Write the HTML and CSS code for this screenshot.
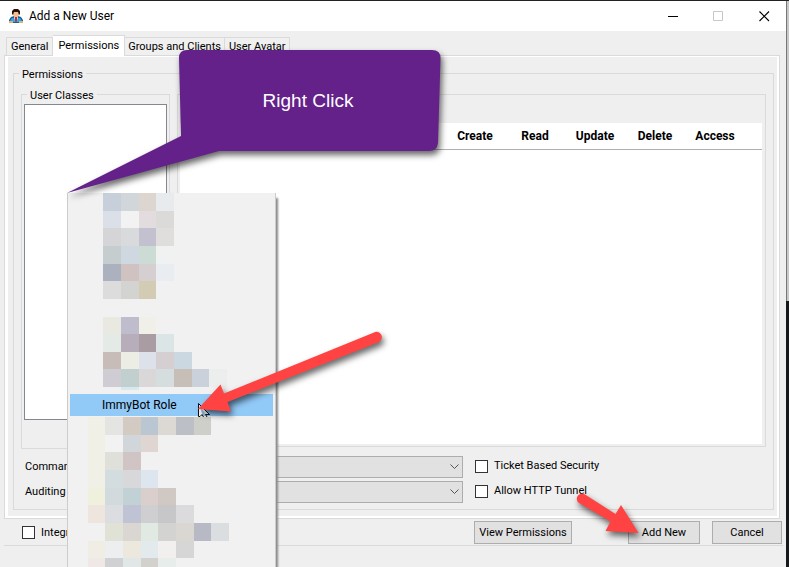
FILE: index.html
```html
<!DOCTYPE html>
<html lang="en">
<head>
<meta charset="utf-8">
<title>Add a New User</title>
<link rel="stylesheet" href="styles.css">
</head>
<body>
<main class="window">
  <header class="titlebar">
    <svg class="app-icon" width="14" height="15" viewBox="0 0 14 15" aria-hidden="true">
      <path d="M0 14v-3l2-3 3-1h4l3 1 2 3v3z" fill="#17609c"/>
      <path d="M1 12l2-3h2l2 4 2-4h2l2 3v1H1z" fill="#2fa5e4"/>
      <path d="M4 3h6v3L8 9H6L4 6z" fill="#f5c08c"/>
      <path d="M3 5V2l2-2h4l2 2v3l-1 1-1-3H5L4 6z" fill="#2a1110"/>
      <path d="M5 8l2 1 2-1-1 4H6z" fill="#fff"/>
      <path d="M6 8h2v4l-1 1-1-1z" fill="#d02a2a"/>
      <path d="M0 12h4v2H0zM10 12h4v2h-4z" fill="#e0b06c"/>
    </svg>
    <h1>Add a New User</h1>
    <div class="caption">
      <button type="button" aria-label="Minimize"><svg width="11" height="11" viewBox="0 0 11 11"><path d="M1 5.500h10" stroke="#000"/></svg></button>
      <button type="button" aria-label="Maximize" disabled><svg width="11" height="11" viewBox="0 0 11 11"><path d="M.5.500h9v9h-9z" fill="none" stroke="#c8c8c8"/></svg></button>
      <button type="button" aria-label="Close"><svg width="11" height="11" viewBox="0 0 11 11"><path d="M.5.500l9.500 9.500M10 .5l-9.500 9.500" stroke="#000" stroke-width="1.100"/></svg></button>
    </div>
  </header>

  <nav class="tabs" role="tablist">
    <button type="button" role="tab">General</button>
    <button type="button" role="tab" class="active" aria-selected="true">Permissions</button>
    <button type="button" role="tab">Groups and Clients</button>
    <button type="button" role="tab">User Avatar</button>
  </nav>

  <section class="panel">
    <div class="group outer">
      <h2>Permissions</h2>
      <div class="columns">
        <div class="group classes">
          <h2>User Classes</h2>
          <div class="listbox" role="listbox" aria-label="User Classes" tabindex="0"></div>
        </div>
        <div class="group rights">
          <div class="sheet">
            <table>
              <thead><tr><th class="name"></th><th>Create</th><th>Read</th><th>Update</th><th>Delete</th><th>Access</th><th class="rest"></th></tr></thead>
            </table>
          </div>
        </div>
      </div>
      <div class="options">
        <label for="command">Command</label>
        <span class="combo"><select id="command"><option></option></select><svg width="9" height="6" viewBox="0 0 9 6"><path d="M.5.500l4 4 4-4" fill="none" stroke="#555"/></svg></span>
        <label class="check"><input type="checkbox">Ticket Based Security</label>
        <label for="auditing">Auditing</label>
        <span class="combo"><select id="auditing"><option></option></select><svg width="9" height="6" viewBox="0 0 9 6"><path d="M.5.500l4 4 4-4" fill="none" stroke="#555"/></svg></span>
        <label class="check"><input type="checkbox">Allow HTTP Tunnel</label>
      </div>
    </div>
  </section>

  <footer class="actions">
    <label class="check"><input type="checkbox">Integration</label>
    <button type="button" class="view">View Permissions</button>
    <button type="button" class="add">Add New</button>
    <button type="button" class="cancel">Cancel</button>
  </footer>
</main>

<div class="menu" role="menu">
  <svg class="mosaic" width="209" height="374" viewBox="67 193 209 374" shape-rendering="crispEdges" aria-hidden="true">
    <g id="upper">
      <path fill="#c7d0da" d="M103 193h18v18h-18z"/><path fill="#d0d6da" d="M121 193h18v18h-18z"/><path fill="#ddd5cf" d="M139 193h17v18h-17z"/><path fill="#e7ebee" d="M156 193h18v18h-18z"/>
      <path fill="#dadfe8" d="M103 211h18v17h-18z"/><path fill="#f2f2f2" d="M121 211h18v17h-18z"/><path fill="#e3dcdf" d="M139 211h17v17h-17z"/><path fill="#dbdad9" d="M156 211h18v17h-18z"/>
      <path fill="#d5d5d8" d="M103 228h18v18h-18z"/><path fill="#d9dadb" d="M121 228h18v18h-18z"/><path fill="#c3c0cf" d="M139 228h17v18h-17z"/><path fill="#dfdedd" d="M156 228h18v18h-18z"/>
      <path fill="#c5cdcf" d="M103 246h18v18h-18z"/><path fill="#cfd8e1" d="M121 246h18v18h-18z"/><path fill="#ccdbd3" d="M139 246h17v18h-17z"/><path fill="#f0f2f1" d="M156 246h18v18h-18z"/>
      <path fill="#abb1bf" d="M103 264h18v17h-18z"/><path fill="#cfc2c1" d="M121 264h18v17h-18z"/><path fill="#d5cfd2" d="M139 264h17v17h-17z"/><path fill="#e9edf1" d="M156 264h18v17h-18z"/>
      <path fill="#dcdcdc" d="M103 281h18v18h-18z"/><path fill="#d3d3d2" d="M121 281h18v18h-18z"/><path fill="#d3cbb3" d="M139 281h17v18h-17z"/>
    </g>
    <g id="middle">
      <path fill="#e9e9e1" d="M103 317h18v17h-18z"/><path fill="#bfbccd" d="M121 317h18v17h-18z"/><path fill="#f0f0e8" d="M139 317h17v17h-17z"/>
      <path fill="#e4ebe7" d="M103 334h18v18h-18z"/><path fill="#b8adba" d="M121 334h18v18h-18z"/><path fill="#a99ca3" d="M139 334h17v18h-17z"/><path fill="#dce5e6" d="M156 334h18v18h-18z"/>
      <path fill="#c7bcb8" d="M103 352h18v17h-18z"/><path fill="#ecede5" d="M121 352h18v17h-18z"/><path fill="#dce1ea" d="M139 352h17v17h-17z"/><path fill="#d5cfd1" d="M156 352h18v17h-18z"/><path fill="#cbd7e1" d="M174 352h18v17h-18z"/>
      <path fill="#cfccd3" d="M103 369h18v18h-18z"/><path fill="#c1cfcf" d="M121 369h18v18h-18z"/><path fill="#d9d7d8" d="M139 369h17v18h-17z"/><path fill="#d5dddf" d="M156 369h18v18h-18z"/><path fill="#c7beb8" d="M174 369h18v18h-18z"/><path fill="#cbd1da" d="M192 369h17v18h-17z"/><path fill="#eceeed" d="M209 369h18v18h-18z"/>
      <path fill="#d7e9ef" d="M121 387h18v3h-18z"/>
    </g>
    <g id="lower">
      <path fill="#f0f0e7" d="M88 417h17v71H88z"/>
      <path fill="#e4e4e3" d="M105 417h18v18h-18z"/><path fill="#d3cbc1" d="M123 417h18v18h-18z"/><path fill="#bbc6d3" d="M141 417h17v18h-17z"/><path fill="#dcd8d4" d="M158 417h18v18h-18z"/><path fill="#bcbfc5" d="M176 417h18v18h-18z"/><path fill="#cecfc9" d="M194 417h17v18h-17z"/>
      <path fill="#f2f2f2" d="M105 435h18v17h-18z"/><path fill="#d1d6da" d="M123 435h18v17h-18z"/><path fill="#dfd5d1" d="M141 435h17v17h-17z"/>
      <path fill="#dfe0da" d="M105 452h18v18h-18z"/><path fill="#d0c4c4" d="M123 452h18v18h-18z"/>
      <path fill="#d3dcde" d="M105 470h18v18h-18z"/><path fill="#d8d8da" d="M123 470h18v18h-18z"/><path fill="#dde6ef" d="M141 470h17v18h-17z"/>
      <path fill="#f0f0df" d="M88 488h17v17H88z"/><path fill="#d2dadd" d="M105 488h18v17h-18z"/><path fill="#c1d1d5" d="M123 488h18v17h-18z"/><path fill="#dacfcc" d="M141 488h17v17h-17z"/><path fill="#d0c8c2" d="M158 488h18v17h-18z"/>
      <path fill="#eee5df" d="M88 505h17v18H88z"/><path fill="#dcdde0" d="M105 505h18v18h-18z"/><path fill="#c0c3d3" d="M123 505h18v18h-18z"/><path fill="#cfced0" d="M141 505h17v18h-17z"/><path fill="#c7c6c9" d="M158 505h18v18h-18z"/><path fill="#dbdadd" d="M176 505h18v18h-18z"/>
      <path fill="#f1f1f2" d="M88 523h17v18H88z"/><path fill="#e1e2d6" d="M105 523h18v18h-18z"/><path fill="#dad6d2" d="M123 523h18v18h-18z"/><path fill="#e0eae2" d="M141 523h17v18h-17z"/><path fill="#d3d3d2" d="M158 523h18v18h-18z"/><path fill="#dad7d3" d="M176 523h18v18h-18z"/><path fill="#b7bac4" d="M194 523h17v18h-17z"/><path fill="#dadee1" d="M211 523h18v18h-18z"/>
      <path fill="#f0ede5" d="M88 541h17v17H88z"/><path fill="#eceef0" d="M105 541h18v17h-18z"/><path fill="#ece8dd" d="M123 541h18v17h-18z"/><path fill="#e2eaee" d="M141 541h17v17h-17z"/><path fill="#f1f0ee" d="M158 541h18v17h-18z"/><path fill="#d6d6d6" d="M176 541h18v17h-18z"/>
      <path fill="#efe8e6" d="M88 558h17v9H88z"/><path fill="#d0d1d3" d="M105 558h18v9h-18z"/><path fill="#e1e6e7" d="M123 558h18v9h-18z"/><path fill="#d3d1cd" d="M141 558h17v9h-17z"/><path fill="#e6edea" d="M158 558h18v9h-18z"/>
    </g>
  </svg>
  <button type="button" role="menuitem" class="menu-item">ImmyBot Role</button>
</div>

<svg class="marks" width="789" height="567" viewBox="0 0 789 567" aria-hidden="true">
  <path d="M198.500 403.500V416.500H200l2-2 1.500 2.500M207 417l-1.500-2.500H209.500L198.500 403.500" fill="#fff" stroke="#111"/>
  <g class="raised">
    <path d="M187 50H432Q441 50 440.500 59L438 143Q437 151 429 151H219L67 193L181 136L179 58Q179 50 187 50Z" fill="#64218a"/>
    <path d="M198 409L220.500 384.500L224 393.500L374 332.500A5 5 0 0 1 379 342L227.500 402L231 411.500Z" fill="#ff4343"/>
    <path d="M638.500 533L621 505L615.500 514L585 494.500A5 5 0 0 0 579 503L610.500 521.500L605.500 531Z" fill="#ff4343"/>
  </g>
</svg>
<p class="callout">Right Click</p>
</body>
</html>
```

FILE: styles.css
```css
* { box-sizing: border-box; }

body {
  margin: 0;
  min-height: 100vh;
  overflow: hidden;
  background: #f0f0f0;
  color: #000;
  font: 11px/14px Roboto, sans-serif;
}

h1, h2, p { margin: 0; font-weight: 400; }
button, select, input { font: inherit; color: inherit; margin: 0; }

.window {
  display: flex;
  flex-direction: column;
  position: relative;
  min-height: 100vh;
  padding-right: 2px;
  border-top: 1px solid #222;
  background: #efefef;
}
.window::after {
  content: "";
  position: absolute;
  top: 0;
  right: 0;
  bottom: 0;
  width: 2px;
  border-left: 1px solid #777;
  border-image: linear-gradient(#777 300px, #16181a 300px) 1;
  background: linear-gradient(#c8c8c8 300px, #16181a 300px);
}

.titlebar {
  display: flex;
  align-items: center;
  height: 30px;
  padding-left: 9px;
  background: #fff;
}
.titlebar h1 {
  flex: 1;
  margin-left: 6px;
  font-size: 12px;
  line-height: 16px;
}
.caption { display: flex; }
.caption button {
  display: grid;
  place-items: center;
  width: 46px;
  height: 28px;
  padding: 0;
  border: 0;
  background: none;
}

.tabs {
  display: flex;
  align-items: flex-end;
  height: 24px;
  padding-left: 6px;
}
.tabs button {
  height: 18px;
  padding: 1px 3px 0;
  border: 1px solid #dadada;
  border-bottom: 0;
  border-left: 0;
  background: #f0f0f0;
  white-space: nowrap;
}
.tabs button:first-child { padding: 1px 4px 0; border-left: 1px solid #dadada; }
.tabs button:last-child { padding: 1px 4px 0; }
.tabs .active {
  position: relative;
  height: 21px;
  margin-bottom: -1px;
  padding: 0 5px 1px;
  background: #fff;
}

.panel {
  margin: 0 7px 0 4px;
  padding: 17px 5px 8px 5px;
  border: 1px solid #dadada;
  box-shadow: inset 3px 0 #fff, inset -2px 0 #fff, inset 0 1px #fff, inset 0 -2px #fff;
}
.group { position: relative; border: 1px solid #dadada; }
.group > h2 {
  position: absolute;
  top: -6px;
  left: 5px;
  padding: 0 3px;
  background: #efefef;
  font-size: 11px;
  line-height: 14px;
}
.outer { margin-left: 3px; padding: 20px 7px 6px 7px; }
.columns { display: flex; gap: 7px; align-items: flex-start; }
.classes { width: 149px; padding: 9px 2px 28px; }
.listbox { height: 316px; border: 1px solid #828790; background: #fff; }
.rights { flex: 1; padding: 28px 3px 2px 2px; }
.sheet { height: 321px; background: #fff; }

table { width: 100%; border-collapse: collapse; table-layout: fixed; }
th {
  width: 60px;
  height: 26px;
  padding: 1px 0 0;
  border-bottom: 1px solid #b0b0b0;
  font: 700 12px/16px Roboto, sans-serif;
}
th.name { width: 265px; }
th.rest { width: auto; }

.options {
  display: grid;
  grid-template-columns: 160px 278px 1fr;
  align-items: center;
  row-gap: 3px;
  margin-top: 7px;
  padding-left: 4px;
}
.combo { display: grid; align-items: center; }
.combo > * { grid-area: 1 / 1; }
.combo svg { justify-self: end; margin-right: 4px; pointer-events: none; }
select {
  appearance: none;
  width: 100%;
  height: 22px;
  border: 1px solid #adadad;
  border-radius: 0;
  background: #e1e1e1;
}
.check { display: flex; align-items: center; gap: 6px; }
.options .check { padding: 0 0 2px 12px; }
.check input {
  appearance: none;
  width: 13px;
  height: 13px;
  border: 1px solid #333;
  background: #fff;
}

.actions {
  display: flex;
  align-items: center;
  margin: 2px 4px 0 4px;
  padding: 0 1px 1px 0;
  border-bottom: 1px solid #dadada;
}
.actions .check { flex: 1; padding-left: 18px; }
.actions button {
  height: 23px;
  padding: 1px 0 0;
  border: 1px solid #adadad;
  background: #e1e1e1;
}
.actions .view { width: 98px; margin-right: 56px; }
.actions .add { width: 72px; margin-right: 12px; }
.actions .cancel { width: 70px; }

.menu {
  position: absolute;
  top: 193px;
  left: 67px;
  width: 209px;
  height: 374px;
  border: 1px solid #ccc;
  border-width: 0 1px;
  background: #f1f1f1;
  box-shadow: 2px 5px 2px #8a8a8a;
}
.mosaic { position: absolute; top: 0; left: -1px; }
.menu-item {
  position: absolute;
  top: 201px;
  left: 2px;
  width: 203px;
  height: 22px;
  padding: 0 0 0 32px;
  border: 0;
  background: #91c9f7;
  font-size: 12px;
  line-height: 16px;
  text-align: left;
}

.marks { position: absolute; top: 0; left: 0; pointer-events: none; }
.raised { filter: drop-shadow(2px 4px 3px rgba(0, 0, 0, .6)); }
.callout {
  position: absolute;
  top: 89px;
  left: 179px;
  width: 258px;
  color: #fff;
  font: 19px/24px "Liberation Sans", Arial, sans-serif;
  text-align: center;
}
```
